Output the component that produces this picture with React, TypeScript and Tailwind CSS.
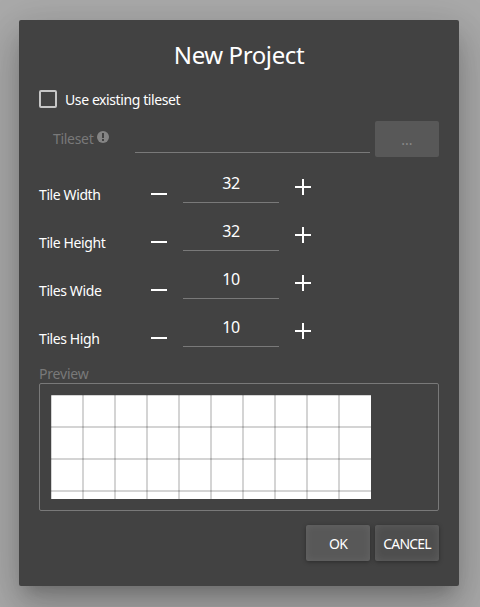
import React from "react";

const fields = [
  { label: "Tile Width", value: "32", tracking: "tracking-[-0.4px]" },
  { label: "Tile Height", value: "32", tracking: "tracking-[-0.4px]" },
  { label: "Tiles Wide", value: "10", tracking: "tracking-[-0.4px]" },
  { label: "Tiles High", value: "10", tracking: "tracking-[-0.4px]" },
];

function Stepper({ label, value, tracking }: { label: string; value: string; tracking: string }) {
  return (
    <div className="flex h-12 items-start">
      <span className={`mt-[15px] w-28 shrink-0 text-[14px] leading-5 whitespace-nowrap ${tracking}`}>{label}</span>
      <button className="mt-4 h-4 w-4" aria-label="Decrease">
        <span className="block h-0.5 w-4 bg-white" />
      </button>
      <div className="ml-4 flex h-[33px] w-24 items-end justify-center border-b border-[#797979] pb-[9px] text-[16px] leading-5 tracking-[-0.4px]">
        {value}
      </div>
      <button className="mt-[9px] ml-4 h-4 w-4" aria-label="Increase">
        <svg className="block" width="16" height="16" viewBox="0 0 16 16" fill="white">
          <path d="M0 7h7V0h2v7h7v2H9v7H7V9H0z" />
        </svg>
      </button>
    </div>
  );
}

export default function App() {
  const lines = Array.from({ length: 10 }, (_, i) => i * 32);
  return (
    <div className="h-[607px] w-[480px] overflow-hidden bg-[#aaaaaa] pt-5 pl-[19px] font-['Noto_Sans',sans-serif] text-white">
      <main className="flex h-[566px] w-[440px] flex-col rounded-[2px] bg-[#424242] px-5 shadow-[0_11px_15px_-7px_rgba(0,0,0,.2),0_24px_38px_3px_rgba(0,0,0,.14),0_9px_46px_8px_rgba(0,0,0,.12)]">
        <h1 className="mt-[19px] h-8 text-center text-[24px] leading-8 font-normal tracking-[-0.4px]">New Project</h1>
        <label className="mt-[19px] flex h-[18px] items-center gap-2 text-[14px] tracking-[-0.4px] whitespace-nowrap">
          <span className="h-[18px] w-[18px] rounded-[2px] border-2 border-[#c6c6c6]" />
          Use existing tileset
        </label>
        <div className="mt-[13px] flex h-9 items-start text-[#797979]">
          <div className="flex w-24 items-center gap-[5px] pt-2 pl-[14px] text-[14px] leading-5">
            <span className="w-[39px] tracking-[-0.3px]">Tileset</span>
            <svg className="-mt-1" width="12" height="12" viewBox="0 0 12 12">
              <circle cx="6" cy="6" r="6" fill="#848484" />
              <path d="M5 2h2v5H5zM5 8h2v2H5z" fill="#424242" />
            </svg>
          </div>
          <div className="h-8 w-[235px] border-b border-[#797979]" />
          <button className="ml-[5px] h-9 w-16 rounded-[2px] bg-[#585858] text-[14px] text-[#898989]">...</button>
        </div>
        <div className="mt-[13px]">
          {fields.map((f) => (
            <Stepper key={f.label} {...f} />
          ))}
        </div>
        <div className="mt-[2px] h-5 text-[14px] leading-5 tracking-[-0.2px] text-[#797979]">Preview</div>
        <section className="-mt-px h-32 w-[400px] rounded-[2px] border border-[#797979] p-[11px]">
          <svg className="block bg-white" width="320" height="104" viewBox="0 0 320 104" stroke="#000" strokeOpacity="0.17" strokeWidth="2">
            {lines.map((x) => (
              <path key={x} d={`M${x} 0V104`} />
            ))}
            {[0, 32, 64, 96].map((y) => (
              <path key={y} d={`M0 ${y}H320`} />
            ))}
          </svg>
        </section>
        <footer className="mt-[14px] flex justify-end gap-[5px] text-[14px]">
          <button className="h-9 w-16 rounded-[2px] bg-[#585858] tracking-[-0.8px] shadow-[inset_0_0_8px_rgba(255,255,255,.08),0_1px_4px_rgba(0,0,0,.35)]">OK</button>
          <button className="h-9 w-16 rounded-[2px] bg-[#4e4e4e] tracking-[-0.8px] shadow-[inset_0_0_8px_rgba(255,255,255,.1),0_1px_4px_rgba(0,0,0,.35)]">CANCEL</button>
        </footer>
      </main>
    </div>
  );
}
